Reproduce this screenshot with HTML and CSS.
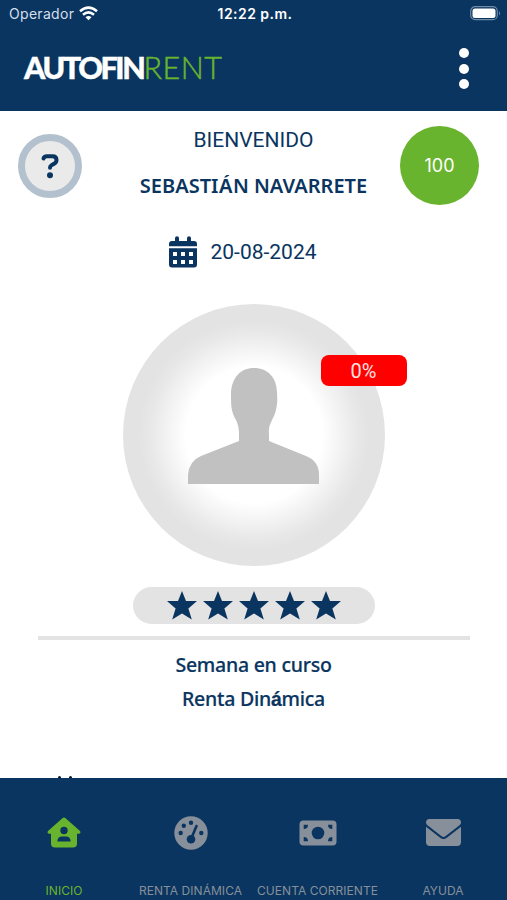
FILE: index.html
```
<!DOCTYPE html>
<html lang="es">
<head>
<meta charset="utf-8">
<title>AutofinRent</title>
<link rel="stylesheet" href="styles.css">
</head>
<body>
<div class="app">
  <header class="header">
    <div class="status">
      <div class="carrier"><span>Operador</span>
        <svg width="19" height="15" viewBox="0 0 19 15" fill="none" stroke="#fff" stroke-width="2.5"><path d="M1 5.2Q9.500-2 18 5.200M4 8.700Q9.500 4 15 8.700"/><path d="M6.500 11.200Q9.500 8.700 12.500 11.200L9.500 14.200Z" fill="#fff" stroke="none"/></svg>
      </div>
      <time class="clock">12:22 p.m.</time>
      <svg class="battery" width="31" height="15" viewBox="0 0 31 15"><rect x=".7" y=".7" width="26.600" height="13" rx="4.500" fill="none" stroke="#708ba8" stroke-width="1.200"/><rect x="2.500" y="2.500" width="23" height="9.400" rx="2.500" fill="#fff"/><path d="M29 5v4.500q2-2.200 0-4.500" fill="#708ba8"/></svg>
    </div>
    <div class="brandbar">
      <div class="logo"><span class="logo-bold">AUTOFIN</span><span class="logo-thin">RENT</span></div>
      <div class="menu"><i></i><i></i><i></i></div>
    </div>
  </header>
  <main class="main">
    <section class="welcome">
      <div class="help"><svg width="20" height="28" viewBox="0 0 20 28"><path d="M3.500 6.500Q4 4.200 7 4.200H12.500Q16.500 4.200 16.500 8Q16.500 10.300 14.500 11.500L11.500 13.300Q10 14 10 15.800" fill="none" stroke="#0a3560" stroke-width="4" stroke-linecap="round"/><circle cx="10" cy="23.300" r="3" fill="#0a3560"/></svg></div>
      <div class="greeting">
        <div class="hello">BIENVENIDO</div>
        <div class="name">SEBASTI<span class="accent">Á</span>N NAVARRETE</div>
      </div>
      <div class="score">100</div>
    </section>
    <div class="date">
      <svg width="28" height="32" viewBox="0 0 28 32"><path fill="#0a3560" fill-rule="evenodd" d="M6 5V2.300a2 2 0 0 1 4 0V5h8V2.300a2 2 0 0 1 4 0V5h3a3 3 0 0 1 3 3v2.300H0V8a3 3 0 0 1 3-3ZM0 12.200h28v16.300a3 3 0 0 1-3 3H3a3 3 0 0 1-3-3ZM4 16v4h4v-4ZM12 16v4h4v-4ZM20 16v4h4v-4ZM4 24v4h4v-4ZM12 24v4h4v-4ZM20 24v4h4v-4Z"/></svg>
      <span>20-08-2024</span>
    </div>
    <div class="avatar">
      <svg width="131" height="116" viewBox="0 0 131 116"><path fill="#c1c1c1" d="M66 0C80 0 89 10 89 25C90 37 88 45 84 52Q80 59 81 66V73L118 88Q131 93 131 107V116H0V107Q1 93 13 88L51 73V66Q51 58 48 52C43 44 43 37 43 25C44 10 52 0 66 0Z"/></svg>
      <div class="badge">0%</div>
    </div>
    <div class="rating">
      <svg viewBox="0 0 30 29"><path d="M15 0l4 10H30l-8.600 7.500L24.800 28.500 15 22.500 5.200 28.500 8.600 17.500 0 10H11z"/></svg>
      <svg viewBox="0 0 30 29"><path d="M15 0l4 10H30l-8.600 7.500L24.800 28.500 15 22.500 5.200 28.500 8.600 17.500 0 10H11z"/></svg>
      <svg viewBox="0 0 30 29"><path d="M15 0l4 10H30l-8.600 7.500L24.800 28.500 15 22.500 5.200 28.500 8.600 17.500 0 10H11z"/></svg>
      <svg viewBox="0 0 30 29"><path d="M15 0l4 10H30l-8.600 7.500L24.800 28.500 15 22.500 5.200 28.500 8.600 17.500 0 10H11z"/></svg>
      <svg viewBox="0 0 30 29"><path d="M15 0l4 10H30l-8.600 7.500L24.800 28.500 15 22.500 5.200 28.500 8.600 17.500 0 10H11z"/></svg>
    </div>
    <div class="divider"></div>
    <div class="week">Semana en curso</div>
    <div class="week plan">Renta Din<span class="accent">á</span>mica</div>
    <div class="peek"><i></i><i></i></div>
  </main>
  <nav class="nav">
    <div class="tab active">
      <div class="icon"><svg width="34" height="31" viewBox="0 0 34 31"><path fill="currentColor" fill-rule="evenodd" d="M15.700 1.100Q17 0 18.300 1.100L33 14Q34.300 16.600 32 16.800H30V26.500Q30 30.500 26 30.500H8Q4 30.500 4 26.500V16.800H2Q-.3 16.600 1 14ZM17 9.800a3.700 3.700 0 1 0 0 7.400a3.700 3.700 0 0 0 0-7.400M10.300 24.600H23.700Q23.500 19.400 19 19.400H15Q10.500 19.400 10.300 24.600Z"/></svg></div>
      <span>INICIO</span>
    </div>
    <div class="tab dynamic">
      <div class="icon"><svg width="34" height="34" viewBox="0 0 34 34"><circle cx="17" cy="17" r="16.700" fill="currentColor"/><g fill="#0a3560"><circle cx="6.700" cy="17" r="2.200"/><circle cx="9.800" cy="9.800" r="2.200"/><circle cx="17" cy="6.700" r="2.200"/><circle cx="27.300" cy="17" r="2.200"/><circle cx="17" cy="23.300" r="4.300"/></g><path d="M17.500 22L22.500 10" stroke="#0a3560" stroke-width="2.600" stroke-linecap="round"/></svg></div>
      <span>RENTA DINÁMICA</span>
    </div>
    <div class="tab account">
      <div class="icon"><svg width="38" height="26" viewBox="0 0 38 26"><rect x=".5" y=".5" width="37" height="25" rx="4" fill="currentColor"/><g fill="#0a3560"><circle cx="19" cy="13" r="6.300"/><path d="M4.700 4.700H9Q9 9 4.700 9ZM33.300 4.700H29Q29 9 33.300 9ZM4.700 21.300H9Q9 17 4.700 17ZM33.300 21.300H29Q29 17 33.300 17Z"/></g></svg></div>
      <span>CUENTA CORRIENTE</span>
    </div>
    <div class="tab support">
      <div class="icon"><svg width="35" height="27" viewBox="0 0 35 27"><path fill="currentColor" d="M3.500 0H31.500Q35 0 35 3.500Q35 5 33.500 6.200L19.400 17.300Q17.500 18.700 15.600 17.300L1.500 6.200Q0 5 0 3.500Q0 0 3.500 0ZM0 7.800L14.200 18.800Q17.500 21.200 20.800 18.800L35 7.800V23Q35 27 31 27H4Q0 27 0 23Z"/></svg></div>
      <span>AYUDA</span>
    </div>
  </nav>
</div>
</body>
</html>
```
FILE: styles.css
```
* { box-sizing: border-box; }
body { margin: 0; background: #fff; color: #0a3560; font-family: Roboto, sans-serif; }
svg { display: block; flex: none; }
.app { width: 507px; height: 900px; display: flex; flex-direction: column; overflow: hidden; white-space: nowrap; }
.header { height: 110.500px; flex: none; background: #0a3560; color: #fff; }
.status { height: 27px; display: grid; grid-template-columns: 1fr auto 1fr; align-items: center; padding: 0 6px 0 9px; font-family: Inter, sans-serif; }
.carrier { display: flex; align-items: center; gap: 5px; font-size: 14px; color: #d5dfeb; letter-spacing: .3px; }
.clock { font-size: 14px; font-weight: 600; letter-spacing: .45px; }
.battery { justify-self: end; }
.brandbar { height: 83px; display: flex; justify-content: space-between; align-items: center; padding: 0 38px 0 24px; }
.logo { font-family: Lato, sans-serif; font-size: 30.500px; line-height: 36px; display: flex; margin-top: -3px; }
.logo-bold { width: 119.500px; font-weight: 900; letter-spacing: -2.400px; -webkit-text-stroke: .4px #fff; }
.logo-thin { color: #69b42e; font-weight: 300; letter-spacing: .5px; -webkit-text-stroke: .5px #69b42e; }
.menu { display: flex; flex-direction: column; gap: 5.500px; }
.menu i { width: 10px; height: 10px; border-radius: 50%; background: #fff; }
.main { height: 667.500px; flex: none; display: flex; flex-direction: column; align-items: center; overflow: hidden; }
.main > * { flex: none; }
.welcome { width: 100%; height: 111px; display: grid; grid-template-columns: 100px 1fr 107px; }
.help { width: 64px; height: 64px; margin: 23.500px 0 0 18px; border: 7px solid #b3c1cf; border-radius: 50%; background: #eaeaea; display: flex; align-items: center; justify-content: center; }
.greeting { text-align: center; padding-top: 16px; }
.hello { font-size: 21px; line-height: 26px; padding-left: 7px; }
.name { font-family: "Noto Sans", sans-serif; font-size: 20px; font-weight: 600; line-height: 28px; margin-top: 19px; padding-left: 7px; }
.accent { font-family: "Liberation Sans", sans-serif; font-weight: 700; }
.score { width: 79px; height: 79px; margin-top: 15.500px; border-radius: 50%; background: #69b42e; color: #fff; font-family: Inter, sans-serif; font-size: 18px; display: flex; align-items: center; justify-content: center; }
.date { height: 60px; display: flex; align-items: center; gap: 13px; font-size: 21px; padding-right: 21px; }
.avatar { position: relative; width: 262px; height: 262px; margin-top: 22.500px; border-radius: 50%; background: radial-gradient(circle closest-side, #fff 0 52%, #f4f4f4 65%, #e8e8e8 79%, #e3e3e3 88%); display: flex; justify-content: center; padding-top: 64px; }
.badge { position: absolute; left: 198px; top: 51px; width: 86px; height: 31px; border-radius: 8px; background: #f00; color: #ffe1e1; font-size: 20px; line-height: 33px; text-align: center; }
.rating { width: 242px; height: 37px; margin-top: 21px; border-radius: 19px; background: #e3e3e3; display: flex; justify-content: center; align-items: center; gap: 6px; }
.rating svg { width: 30px; height: 29px; fill: #0a3560; }
.divider { width: 432px; height: 4px; margin-top: 12px; background: #e3e3e3; }
.week { font-family: "Noto Sans", sans-serif; font-size: 19.500px; font-weight: 500; line-height: 28px; margin-top: 11px; letter-spacing: -.25px; -webkit-text-stroke: .2px #0a3560; }
.plan { margin-top: 6px; }
.peek { align-self: flex-start; display: flex; gap: 8px; margin: 63px 0 0 58px; }
.peek i { width: 3px; height: 3px; border-radius: 50%; background: #05172c; }
.nav { flex: 1; background: #0a3560; color: #87909a; display: grid; grid-template-columns: 128px 125px 129px 122px; }
.tab { display: flex; flex-direction: column; align-items: center; font-family: Inter, sans-serif; font-size: 12px; line-height: 16px; padding-top: 33.500px; }
.icon { height: 42px; display: flex; align-items: center; }
.tab span { margin-top: 29.500px; letter-spacing: .05px; }
.active { color: #69b42e; }
```
